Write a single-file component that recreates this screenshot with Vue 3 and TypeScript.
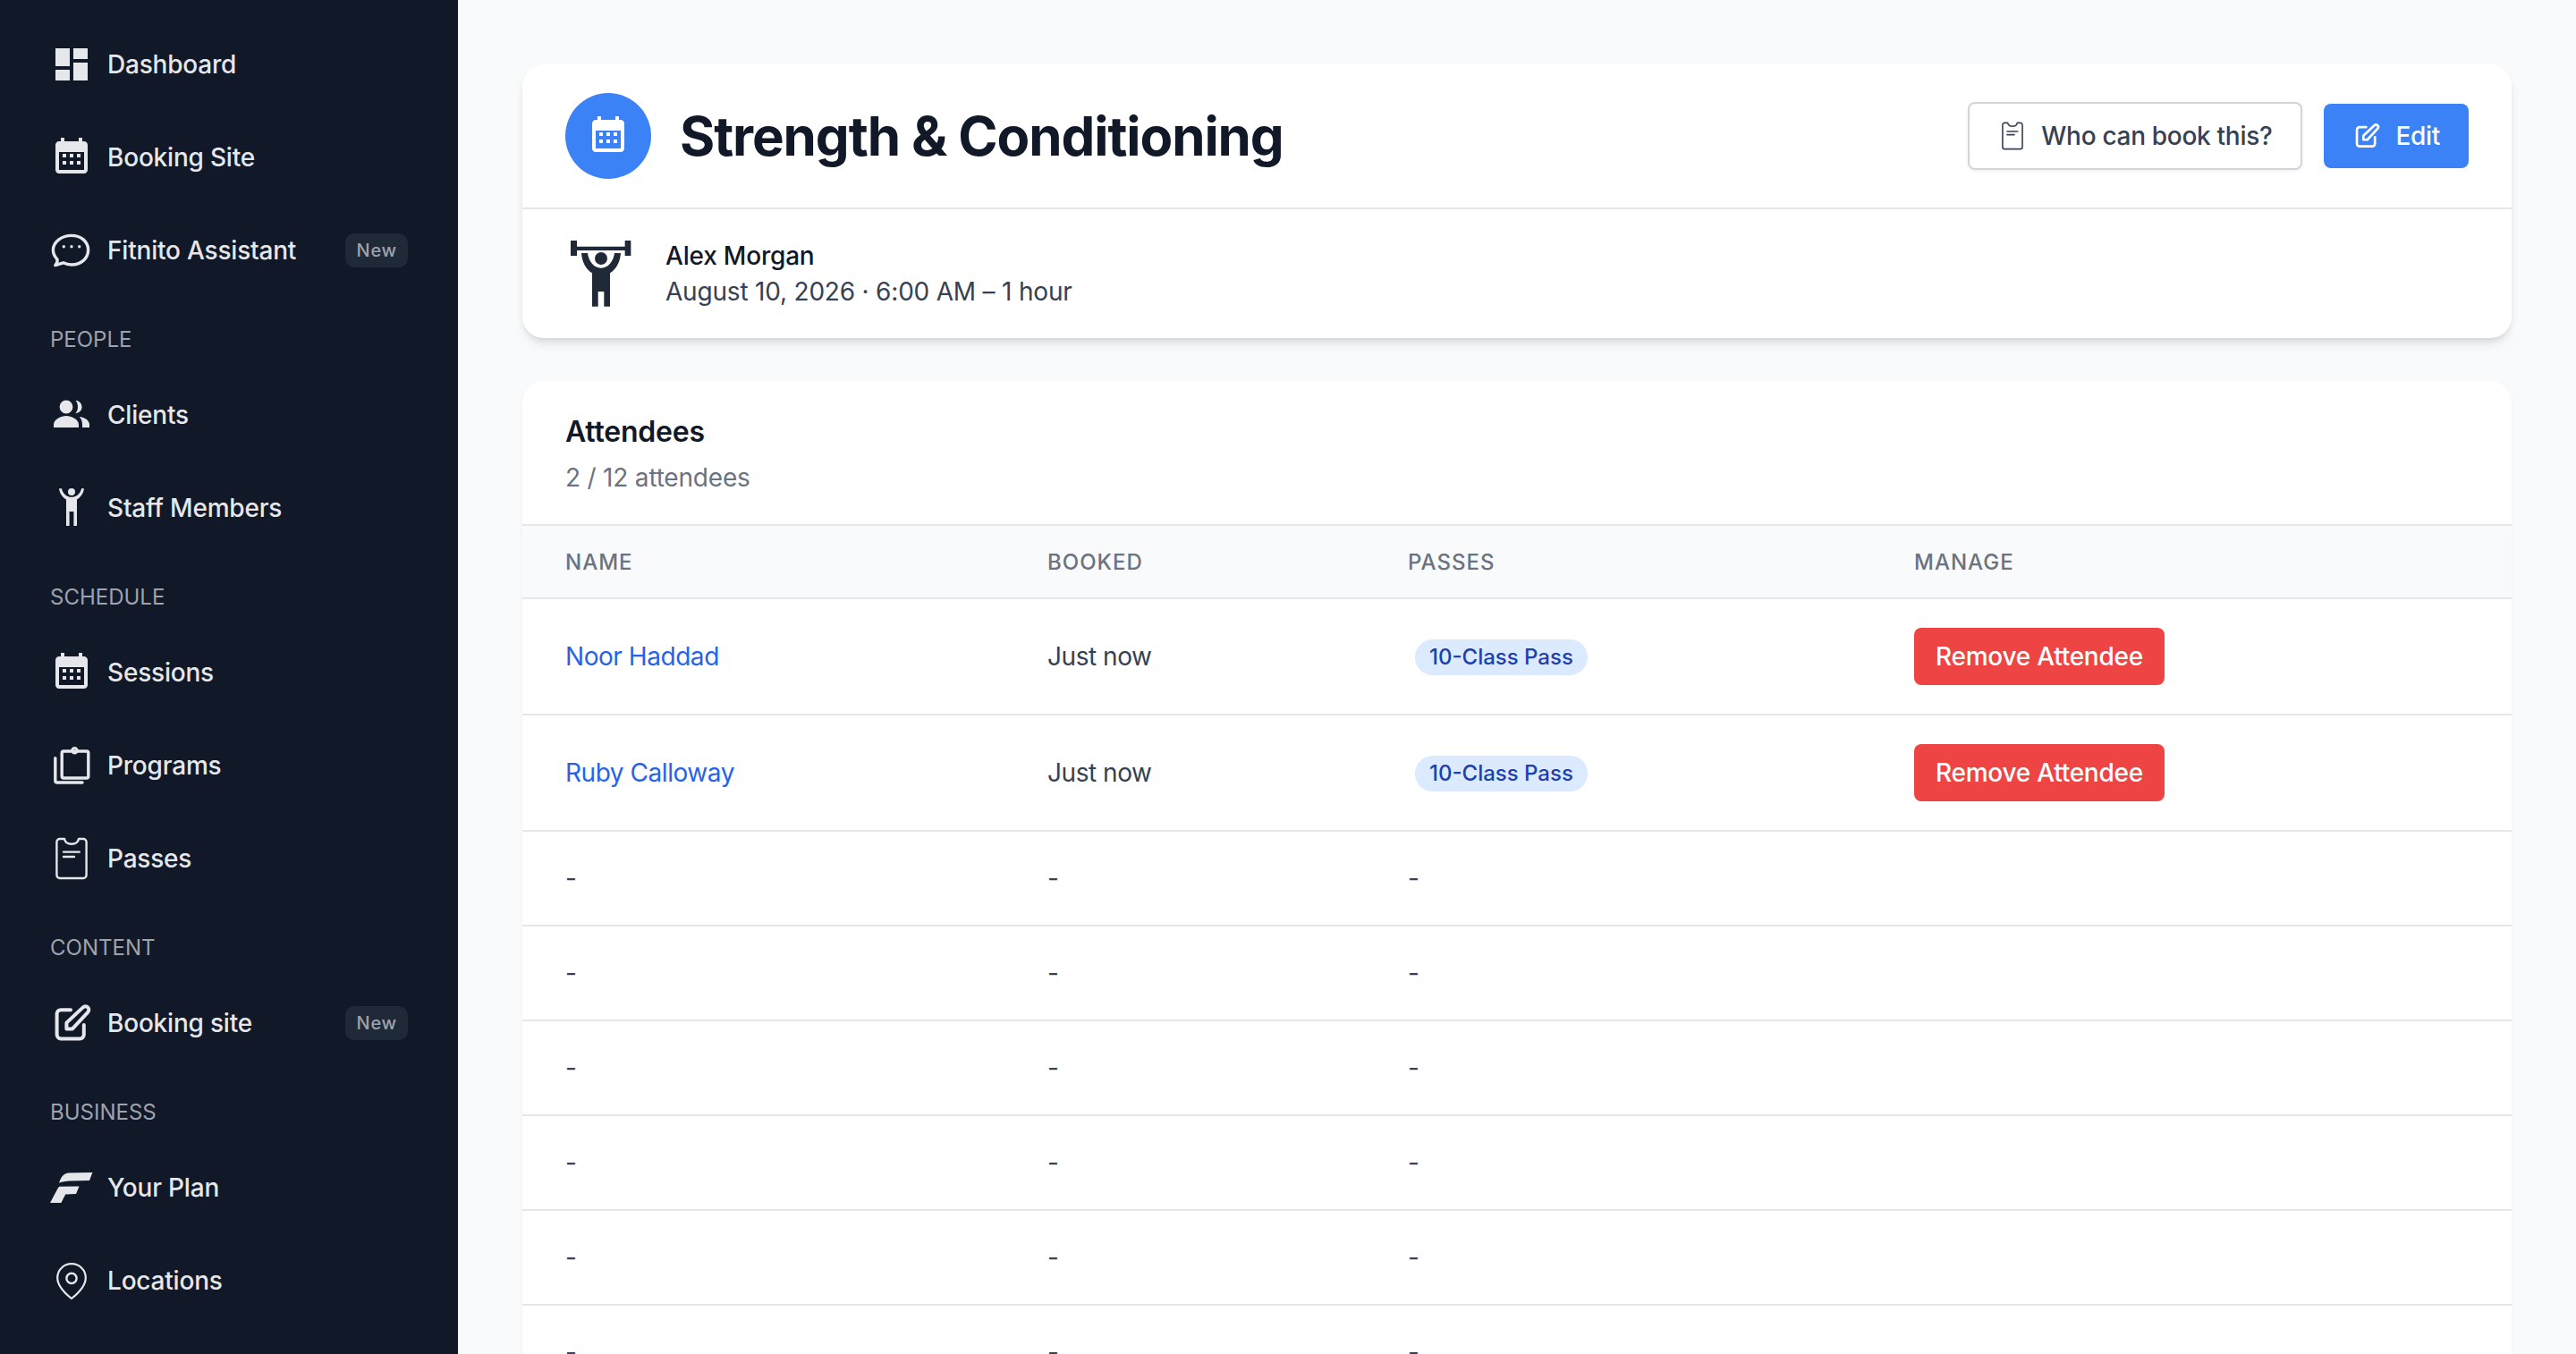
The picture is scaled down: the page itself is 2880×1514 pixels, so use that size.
<script setup lang="ts">
import { h } from 'vue'

type Shape = { d: string; stroke?: number; rule?: 'evenodd' }

const calendarDots =
  'M7 10h2v2H7zM11 10h2v2h-2zM15 10h2v2h-2zM7 14h2v2H7zM11 14h2v2h-2zM15 14h2v2h-2z'
const passShape =
  'M5.4 1H8c.4 1.900 2 2.900 4 2.900s3.600-1 4-2.900h2.600a1.700 1.700 0 0 1 1.700 1.700v18.600a1.700 1.700 0 0 1-1.700 1.700H5.400a1.700 1.700 0 0 1-1.700-1.700V2.700A1.700 1.700 0 0 1 5.400 1z'

const icons: Record<string, Shape[]> = {
  dashboard: [{ d: 'M3 13h8V3H3v10zm0 8h8v-6H3v6zm10 0h8V11h-8v10zm0-18v6h8V3h-8z' }],
  calendar: [
    {
      d: 'M19 3h-1V1h-2v2H8V1H6v2H5c-1.110 0-1.990.9-1.990 2L3 19c0 1.100.89 2 2 2h14c1.100 0 2-.9 2-2V5c0-1.100-.9-2-2-2zm0 16H5V9h14v10z',
    },
    { d: calendarDots },
  ],
  chat: [
    {
      d: 'M12 3.700c5.200 0 9.300 3.300 9.300 8.100s-4.100 8.200-9.300 8.200c-1.700 0-3.300-.4-4.600-1.100L2.900 20.300c.9-1 1.300-2.100 1.100-3.300-1.400-1.400-2.300-3.200-2.300-5.200 0-4.800 5.100-8.100 10.300-8.100z',
      stroke: 1.700,
    },
    { d: 'M6.800 9.900a.85.85 0 1 0 1.700 0a.85.85 0 1 0-1.700 0zM11.150 9.900a.85.85 0 1 0 1.700 0a.85.85 0 1 0-1.700 0zM15.500 9.900a.85.85 0 1 0 1.700 0a.85.85 0 1 0-1.700 0z' },
  ],
  people: [
    { d: 'M5.300 7.500a3.700 3.700 0 1 0 7.400 0a3.700 3.700 0 1 0-7.400 0z' },
    { d: 'M14.200 3.900a3.500 3.500 0 1 1 0 7.200c.9-1 1.300-2.200 1.300-3.600s-.4-2.600-1.300-3.600z' },
    { d: 'M2 19v-1.600c0-3 4.200-4.900 7-4.900s7 1.900 7 4.900V19z' },
    { d: 'M16.400 13c2.800.3 5.600 1.900 5.600 4.400V19h-4v-1.600c0-1.900-.6-3.300-1.600-4.400z' },
  ],
  staff: [
    { d: 'M10 3a2 2 0 1 0 4 0a2 2 0 1 0-4 0z' },
    {
      d: 'M5 1.100C5.300 3.600 6.800 6 9 7.200V22h1.800v-8h2.400v8H15V7.200C17.200 6 18.700 3.600 19 1.100h-1.500C17 3.700 15 5.900 12 5.900S7 3.700 6.500 1.100z',
    },
  ],
  programs: [
    { d: 'M7.600 4h12.800a1 1 0 0 1 1 1v13a1 1 0 0 1-1 1H7.600a1 1 0 0 1-1-1V5a1 1 0 0 1 1-1z', stroke: 1.700 },
    { d: 'M2.900 7.800v12.700a1 1 0 0 0 1 1H18', stroke: 1.700 },
    { d: 'M11.600 3.600a2.100 2.100 0 1 0 4.200 0a2.100 2.100 0 1 0-4.200 0zM13 3.600a.7.7 0 1 1 1.400 0a.7.7 0 1 1-1.400 0z', rule: 'evenodd' },
  ],
  pass: [
    { d: passShape, stroke: 1.200 },
    { d: 'M7.500 8.300h8.900M7.500 11h6', stroke: 1.200 },
  ],
  edit: [
    { d: 'M11.500 4.600H6A2.200 2.200 0 0 0 3.800 6.800v11.700A2.200 2.200 0 0 0 6 20.700h10.700a2.200 2.200 0 0 0 2.200-2.200V13', stroke: 2 },
    { d: 'M9.200 15.200v-3.400l9.200-8.600a1.900 1.900 0 0 1 2.700 2.700l-8.600 9.300z', stroke: 2 },
  ],
  logo: [
    { d: 'M5 9.400C6.200 5.800 7.800 4 10.500 3.800L23.700 3.500 22 8l-10.800.3C8.800 8.400 6.700 8.700 5 9.400z' },
    { d: 'M0 20.500 4.400 12.300c.3-.6.700-.9 1.300-.9L16.300 11.300 14.500 15.500l-5.900.3L6.200 20.500z' },
  ],
  pin: [
    { d: 'M12 2.600c4.400 0 7.900 3.400 7.900 7.800 0 4.400-3.700 8.300-7.900 11.600-4.200-3.300-7.900-7.200-7.900-11.600 0-4.400 3.500-7.800 7.900-7.800z', stroke: 1.100 },
    { d: 'M9.200 10.700a2.800 2.800 0 1 0 5.600 0a2.800 2.800 0 1 0-5.600 0z', stroke: 1.200 },
  ],
  lifter: [
    { d: 'M1.800.900h2.100v2h16.100v-2h2v5.100h-2V4.200H3.900V6H1.800z' },
    { d: 'M9.900 6.900a2.100 2.100 0 1 0 4.200 0a2.100 2.100 0 1 0-4.200 0z' },
    {
      d: 'M5.400 5.100h2.100c.3 2.600 2 5 4.500 5s4.200-2.400 4.500-5h2.100c-.2 3-1.600 5.500-3.600 6.700V23h-2V18h-2v5H9V11.800C7 10.600 5.600 8.100 5.400 5.100z',
    },
  ],
}

const Icon = (props: { name: string; size?: number }) =>
  h(
    'svg',
    { viewBox: '0 0 24 24', width: props.size ?? 48, height: props.size ?? 48, class: 'icon' },
    icons[props.name].map((s) =>
      h('path', {
        d: s.d,
        fill: s.stroke ? 'none' : 'currentColor',
        stroke: s.stroke ? 'currentColor' : 'none',
        'stroke-width': s.stroke,
        'stroke-linejoin': 'round',
        'stroke-linecap': 'round',
        'fill-rule': s.rule,
      }),
    ),
  )
Icon.props = ['name', 'size']

const nav = [
  {
    items: [
      { label: 'Dashboard', icon: 'dashboard' },
      { label: 'Booking Site', icon: 'calendar' },
      { label: 'Fitnito Assistant', icon: 'chat', badge: true },
    ],
  },
  {
    title: 'People',
    items: [
      { label: 'Clients', icon: 'people' },
      { label: 'Staff Members', icon: 'staff' },
    ],
  },
  {
    title: 'Schedule',
    items: [
      { label: 'Sessions', icon: 'calendar' },
      { label: 'Programs', icon: 'programs' },
      { label: 'Passes', icon: 'pass' },
    ],
  },
  { title: 'Content', items: [{ label: 'Booking site', icon: 'edit', badge: true }] },
  {
    title: 'Business',
    items: [
      { label: 'Your Plan', icon: 'logo' },
      { label: 'Locations', icon: 'pin' },
    ],
  },
]

const attendees = ['Noor Haddad', 'Ruby Calloway']
const emptyRows = 10
</script>

<template>
  <div class="layout">
    <aside class="sidebar">
      <section v-for="(group, i) in nav" :key="i">
        <h3 v-if="group.title" class="sidebar__title">{{ group.title }}</h3>
        <a v-for="item in group.items" :key="item.label" class="nav-item">
          <Icon :name="item.icon" />
          <span class="nav-item__label">{{ item.label }}</span>
          <span v-if="'badge' in item" class="nav-item__badge">New</span>
        </a>
      </section>
    </aside>

    <main class="main">
      <section class="card card--session">
        <header class="session-head">
          <div class="session-head__icon"><Icon name="calendar" /></div>
          <h1 class="session-head__title">Strength &amp; Conditioning</h1>
          <div class="session-head__actions">
            <button type="button" class="btn btn--outline"><Icon name="pass" :size="32" />Who can book this?</button>
            <button type="button" class="btn btn--primary"><Icon name="edit" :size="32" />Edit</button>
          </div>
        </header>
        <div class="session-info">
          <Icon name="lifter" :size="80" class="session-info__icon" />
          <div>
            <div class="session-info__coach">Alex Morgan</div>
            <div class="session-info__time">August 10, 2026 · 6:00 AM – 1 hour</div>
          </div>
        </div>
      </section>

      <section class="card card--attendees">
        <div class="attendees-head">
          <h2 class="attendees-head__title">Attendees</h2>
          <p class="attendees-head__count">2 / 12 attendees</p>
        </div>
        <table class="table">
          <colgroup>
            <col class="col-name" />
            <col class="col-booked" />
            <col class="col-passes" />
            <col />
          </colgroup>
          <thead>
            <tr>
              <th>Name</th>
              <th>Booked</th>
              <th>Passes</th>
              <th>Manage</th>
            </tr>
          </thead>
          <tbody>
            <tr v-for="name in attendees" :key="name">
              <td><a class="table__link">{{ name }}</a></td>
              <td>Just now</td>
              <td><span class="pill">10-Class Pass</span></td>
              <td><button type="button" class="btn-remove">Remove Attendee</button></td>
            </tr>
            <tr v-for="n in emptyRows" :key="n">
              <td>-</td>
              <td>-</td>
              <td>-</td>
              <td></td>
            </tr>
          </tbody>
        </table>
      </section>
    </main>
  </div>
</template>

<style>
body {
  overflow: hidden;
}
</style>

<style scoped>
.layout {
  display: flex;
  height: 100vh;
  overflow: hidden;
  background: #f9fafb;
  font-family: Inter, 'Liberation Sans', sans-serif;
  font-size: 28px;
  line-height: 40px;
  letter-spacing: -0.2px;
}

.icon {
  display: block;
  flex-shrink: 0;
}

.sidebar {
  flex: 0 0 512px;
  padding-top: 20px;
  background: #111827;
  color: #e5e7eb;
}

.sidebar__title {
  margin: 32px 0 16px;
  padding-left: 56px;
  font-size: 24px;
  font-weight: 400;
  line-height: 32px;
  letter-spacing: 0;
  text-transform: uppercase;
  color: #9ca3af;
}

.nav-item {
  display: flex;
  align-items: center;
  gap: 16px;
  height: 104px;
  padding: 0 56px;
  font-weight: 500;
}

.nav-item__badge {
  margin-left: auto;
  padding: 0 12px;
  border-radius: 10px;
  background: #1f2937;
  color: #9ca3af;
  font-size: 20px;
  line-height: 38px;
  letter-spacing: 0.8px;
}

.main {
  flex: 1;
  min-width: 0;
  padding: 72px;
}

.card {
  background: #ffffff;
  border-radius: 24px;
}

.card--session {
  box-shadow:
    0 8px 12px -2px rgba(0, 0, 0, 0.1),
    0 4px 8px -4px rgba(0, 0, 0, 0.1);
}

.card--attendees {
  margin-top: 48px;
  overflow: hidden;
  box-shadow: 0 2px 4px rgba(0, 0, 0, 0.05);
}

.session-head {
  display: flex;
  align-items: center;
  gap: 32px;
  padding: 32px 48px;
  border-bottom: 2px solid #e5e7eb;
}

.session-head__icon {
  display: flex;
  align-items: center;
  justify-content: center;
  width: 96px;
  height: 96px;
  border-radius: 50%;
  background: #3b82f6;
  color: #ffffff;
}

.session-head__title {
  margin: 0;
  font-size: 60px;
  font-weight: 700;
  line-height: 72px;
  letter-spacing: -1.1px;
  color: #111827;
}

.session-head__actions {
  display: flex;
  align-items: center;
  gap: 24px;
  margin-left: auto;
}

.btn {
  display: inline-flex;
  align-items: center;
  gap: 16px;
  padding: 16px 32px;
  border: 0;
  border-radius: 8px;
  font: inherit;
  font-weight: 500;
  letter-spacing: -0.3px;
}

.btn--outline {
  border: 2px solid #d1d5db;
  background: #ffffff;
  color: #374151;
  box-shadow: 0 2px 4px rgba(0, 0, 0, 0.05);
}

.btn--primary {
  background: #3b82f6;
  color: #ffffff;
}

.session-info {
  display: flex;
  align-items: center;
  gap: 32px;
  padding: 32px 48px;
  color: #1f2937;
}

.session-info__coach {
  font-weight: 500;
  color: #111827;
}

.session-info__time {
  color: #374151;
}

.attendees-head {
  padding: 33px 48px 32px;
  border-bottom: 2px solid #e5e7eb;
}

.attendees-head__title {
  margin: 0 0 7px;
  font-size: 32px;
  font-weight: 600;
  line-height: 48px;
  color: #111827;
}

.attendees-head__count {
  margin: 0;
  color: #6b7280;
}

.table {
  width: 100%;
  border-collapse: collapse;
  table-layout: fixed;
}

.col-name {
  width: 539px;
}

.col-booked {
  width: 403px;
}

.col-passes {
  width: 566px;
}

.table th {
  padding: 25px 48px 23px;
  border-bottom: 2px solid #e5e7eb;
  background: #f9fafb;
  font-size: 24px;
  font-weight: 500;
  line-height: 32px;
  letter-spacing: 1px;
  text-align: left;
  text-transform: uppercase;
  color: #6b7280;
}

.table td {
  padding: 32px 48px;
  border-bottom: 2px solid #e5e7eb;
  color: #374151;
  letter-spacing: -0.45px;
}

.table__link {
  color: #2563eb;
}

.pill {
  display: inline-block;
  margin-left: 8px;
  padding: 0 16px;
  border-radius: 20px;
  background: #dbeafe;
  color: #1e40af;
  font-size: 24px;
  font-weight: 500;
  line-height: 40px;
  letter-spacing: 0;
  vertical-align: middle;
}

.btn-remove {
  display: block;
  height: 64px;
  padding: 0 24px;
  border: 0;
  border-radius: 8px;
  background: #ef4444;
  color: #ffffff;
  font: inherit;
  font-weight: 500;
  letter-spacing: -0.25px;
}
</style>
